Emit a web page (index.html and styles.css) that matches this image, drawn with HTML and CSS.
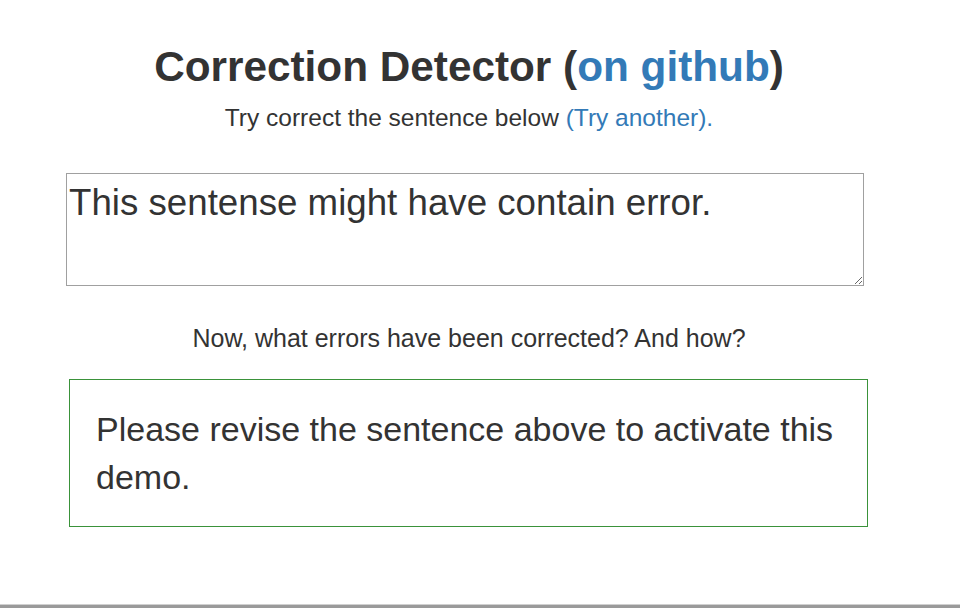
FILE: index.html
```html
<!DOCTYPE html>
<html>
<head>
<meta charset="utf-8">
<link rel="stylesheet" href="styles.css">
</head>
<body>
<div class="page">
  <div class="container">
    <h1 class="title">Correction Detector (<a href="#">on github</a>)</h1>
    <p class="lead">Try correct the sentence below <a href="#">(Try another).</a></p>
    <textarea class="editor">This sentense might have contain error.</textarea>
    <p class="question">Now, what errors have been corrected? And how?</p>
    <div class="result">Please revise the sentence above to activate this demo.</div>
  </div>
</div>
<div class="bottom-bar"></div>
</body>
</html>
```

FILE: styles.css
```css
html, body {
  margin: 0;
  padding: 0;
  background: #fff;
}
body {
  font-family: "Liberation Sans", Arial, sans-serif;
  color: #333;
  height: 608px;
  display: flex;
  flex-direction: column;
}
.page {
  flex: 1;
}
.container {
  width: 806px;
  margin-left: 66px;
  display: flex;
  flex-direction: column;
  align-items: center;
}
a {
  color: #337ab7;
  text-decoration: none;
}
.title {
  margin: 41px 0 0;
  font-size: 42.3px;
  font-weight: bold;
  line-height: 52px;
}
.lead {
  margin: 9px 0 0;
  font-size: 24.5px;
  line-height: 32px;
  font-weight: normal;
}
.editor {
  margin: 39px 0 0;
  align-self: flex-start;
  width: 798px;
  height: 113px;
  box-sizing: border-box;
  border: 1px solid #a0a0a0;
  padding: 7px 2px;
  font-family: "Liberation Sans", Arial, sans-serif;
  font-size: 36.7px;
  line-height: 44px;
  color: #333;
  resize: vertical;
  outline: none;
}
.question {
  margin: 36px 0 0;
  font-size: 25px;
  line-height: 32px;
}
.result {
  margin: 25px 0 0 3px;
  align-self: flex-start;
  width: 799px;
  height: 148px;
  box-sizing: border-box;
  border: 1px solid #3a923a;
  padding: 25px 26px;
  font-size: 34px;
  line-height: 48px;
}
.bottom-bar {
  height: 3px;
  background: #9a9a9a;
  border-top: 1px solid #d0d0d0;
}
```
